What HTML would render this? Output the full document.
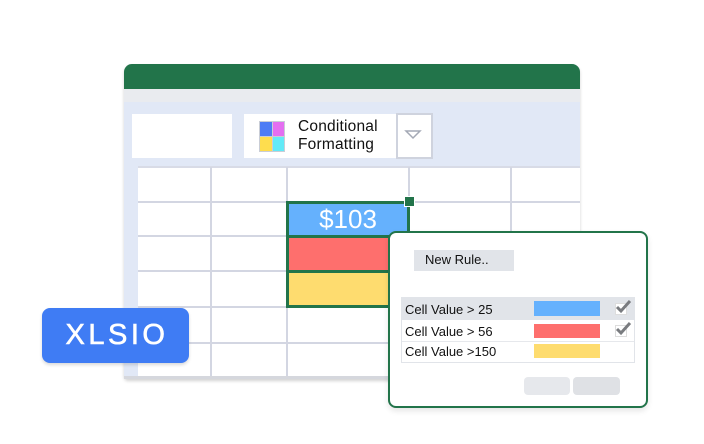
<!DOCTYPE html>
<html><head><meta charset="utf-8"><style>
*{margin:0;padding:0;box-sizing:border-box}
body{width:704px;height:444px;background:#fff;position:relative;overflow:hidden;font-family:"Liberation Sans","DejaVu Sans",sans-serif}
.a{position:absolute}
.hl{position:absolute;height:2px;background:#d3d6e2}
.vl{position:absolute;width:2px;background:#d3d6e2}
.t{font-size:13px;color:#111;position:absolute}
</style></head><body>
<div class="a" style="left:124px;top:64px;width:456px;height:315px;border-radius:8px 8px 4px 4px;background:#e1e8f6;overflow:hidden;box-shadow:0 2px 3px rgba(0,0,0,.18)">
  <div class="a" style="left:0;top:0;width:456px;height:25px;background:#22744a"></div>
  <div class="a" style="left:0;top:25px;width:456px;height:13px;background:#e9ebef"></div>
</div>
<div class="a" style="left:132px;top:114px;width:100px;height:44px;background:#fff"></div>
<div class="a" style="left:244px;top:114px;width:152px;height:44px;background:#fff"></div>
<div class="a" style="left:259px;top:121px;width:26px;height:31px;background:#c9cdd6"></div>
<div class="a" style="left:260px;top:122px;width:12px;height:14px;background:#4d7cf5"></div>
<div class="a" style="left:273px;top:122px;width:11px;height:14px;background:#e46ef1"></div>
<div class="a" style="left:260px;top:137px;width:12px;height:14px;background:#fedd4e"></div>
<div class="a" style="left:273px;top:137px;width:11px;height:14px;background:#62eaf7"></div>
<div class="a" style="left:298px;top:118px;font-size:15.5px;line-height:18px;color:#111;letter-spacing:0.2px">Conditional<br>Formatting</div>
<div class="a" style="left:396px;top:113px;width:37px;height:46px;background:#fff;border:2px solid #cfd3de"></div>
<svg class="a" style="left:404px;top:128px" width="20" height="12"><path d="M2 3 L16 3 L9 10 Z" fill="none" stroke="#a4a9b5" stroke-width="1.5"/></svg>
<div class="a" style="left:138px;top:167px;width:442px;height:211px;background:#fff"></div>
<div class="hl" style="left:138px;top:166px;width:442px;background:#d8dbe6"></div>
<div class="hl" style="left:138px;top:201px;width:442px"></div>
<div class="hl" style="left:138px;top:235px;width:442px"></div>
<div class="hl" style="left:138px;top:270px;width:442px"></div>
<div class="hl" style="left:138px;top:306px;width:442px"></div>
<div class="hl" style="left:138px;top:342px;width:442px"></div>
<div class="vl" style="left:210px;top:167px;height:211px"></div>
<div class="vl" style="left:286px;top:167px;height:211px"></div>
<div class="vl" style="left:408px;top:167px;height:211px"></div>
<div class="vl" style="left:510px;top:167px;height:211px"></div>
<div class="a" style="left:124px;top:376px;width:456px;height:3px;background:#d5d7dd"></div>
<div class="a" style="left:286px;top:201px;width:124px;height:107px;background:#22744a"></div>
<div class="a" style="left:289px;top:204px;width:118px;height:31px;background:#65b1fd;color:#fff;font-size:26px;text-align:center;line-height:31px">$103</div>
<div class="a" style="left:289px;top:238px;width:118px;height:32px;background:#fe6f6d"></div>
<div class="a" style="left:289px;top:273px;width:118px;height:32px;background:#fedc6f"></div>
<div class="a" style="left:404px;top:196px;width:11px;height:11px;background:#22744a;border:1.5px solid #fff"></div>
<div class="a" style="left:42px;top:308px;width:147px;height:55px;background:#3f7cf4;border-radius:8px;color:#fff;font-size:29px;letter-spacing:3.5px;text-align:center;line-height:55px;padding-left:3px;box-shadow:0 2px 3px rgba(0,0,0,.15);-webkit-text-stroke:0.6px #fff">XLSIO</div>
<div class="a" style="left:388px;top:231px;width:260px;height:177px;background:#fff;border:2px solid #22744a;border-radius:8px;box-shadow:0 3px 6px rgba(0,0,0,.1)"></div>
<div class="a" style="left:414px;top:250px;width:100px;height:21px;background:#e1e4e9"></div>
<div class="t" style="left:425px;top:252px">New Rule..</div>
<div class="a" style="left:401px;top:297px;width:234px;height:66px;border:1px solid #e1e4e9"></div>
<div class="a" style="left:402px;top:298px;width:232px;height:22px;background:#e1e4e9"></div>
<div class="a" style="left:402px;top:341px;width:232px;height:1px;background:#e6e8ec"></div>
<div class="t" style="left:405px;top:302px">Cell Value &gt; 25</div>
<div class="t" style="left:405px;top:324px">Cell Value &gt; 56</div>
<div class="t" style="left:405px;top:344px">Cell Value &gt;150</div>
<div class="a" style="left:534px;top:301px;width:66px;height:15px;background:#65b1fd"></div>
<div class="a" style="left:534px;top:324px;width:66px;height:14px;background:#fe6f6d"></div>
<div class="a" style="left:534px;top:344px;width:66px;height:14px;background:#fedc6f"></div>
<div class="a" style="left:615px;top:303px;width:12px;height:12px;background:#fff;border:1px solid #ddd"></div>
<div class="a" style="left:615px;top:325px;width:12px;height:12px;background:#fff;border:1px solid #ddd"></div>
<svg class="a" style="left:614px;top:298px" width="20" height="16"><path d="M3 9 L7 13 L16 3" fill="none" stroke="#7a7c80" stroke-width="3"/></svg>
<svg class="a" style="left:614px;top:320px" width="20" height="16"><path d="M3 9 L7 13 L16 3" fill="none" stroke="#7a7c80" stroke-width="3"/></svg>
<div class="a" style="left:524px;top:377px;width:46px;height:18px;background:#e6e8ec;border-radius:4px"></div>
<div class="a" style="left:573px;top:377px;width:47px;height:18px;background:#dfe1e5;border-radius:4px"></div>
</body></html>
